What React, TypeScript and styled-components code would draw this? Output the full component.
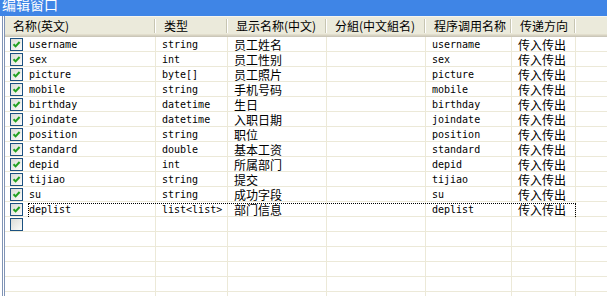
import React from 'react';
import styled, {createGlobalStyle} from "styled-components";

const GlobalStyle = createGlobalStyle`
  html, body {
    margin: 0;
    padding: 0;
    background: #fff;
  }
  body {
    font-family: "Noto Sans CJK SC", "DejaVu Sans", sans-serif;
  }
`;

type Field = {
  name: string;
  type: string;
  label: string;
  group: string;
  callName: string;
  direction: string;
};

const fields: Field[] = [
  {name: 'username', type: 'string', label: '员工姓名', group: '', callName: 'username', direction: '传入传出'},
  {name: 'sex', type: 'int', label: '员工性别', group: '', callName: 'sex', direction: '传入传出'},
  {name: 'picture', type: 'byte[]', label: '员工照片', group: '', callName: 'picture', direction: '传入传出'},
  {name: 'mobile', type: 'string', label: '手机号码', group: '', callName: 'mobile', direction: '传入传出'},
  {name: 'birthday', type: 'datetime', label: '生日', group: '', callName: 'birthday', direction: '传入传出'},
  {name: 'joindate', type: 'datetime', label: '入职日期', group: '', callName: 'joindate', direction: '传入传出'},
  {name: 'position', type: 'string', label: '职位', group: '', callName: 'position', direction: '传入传出'},
  {name: 'standard', type: 'double', label: '基本工资', group: '', callName: 'standard', direction: '传入传出'},
  {name: 'depid', type: 'int', label: '所属部门', group: '', callName: 'depid', direction: '传入传出'},
  {name: 'tijiao', type: 'string', label: '提交', group: '', callName: 'tijiao', direction: '传入传出'},
  {name: 'su', type: 'string', label: '成功字段', group: '', callName: 'su', direction: '传入传出'},
  {name: 'deplist', type: 'list<list>', label: '部门信息', group: '', callName: 'deplist', direction: '传入传出'},
];

const headers = ['名称(英文)', '类型', '显示名称(中文)', '分組(中文組名)', '程序调用名称', '传递方向'];

const COLUMNS = '151px 72px 99px 99px 86px 64px 1fr';
const GRID = '#ece9d8';

const CheckBox = ({checked}: {checked: boolean}) => (
  <StyledCheck>
    {checked && (
      <svg width="9" height="9" viewBox="0 0 9 9">
        <path d="M1.5 4.2 L3.6 6.4 L7.6 2" fill="none" stroke="#21a121" strokeWidth="2"/>
      </svg>
    )}
  </StyledCheck>
);

const App = () => {
  const fillers = [0, 1, 2, 3, 4];

  return (
    <Window>
      <GlobalStyle/>
      <TitleBar><span>编辑窗口</span></TitleBar>
      <Frame>
        <Header>
          {headers.map((h) => (
            <HeaderCell key={h}>
              <span>{h}</span>
              <Sep/>
            </HeaderCell>
          ))}
          <HeaderCell/>
        </Header>

        {fields.map((f, index) => (
          <Row key={f.name} $focused={index === fields.length - 1}>
            <NameCell>
              <CheckBox checked/>
              <Text $mono>{f.name}</Text>
            </NameCell>
            <Cell><Text $mono>{f.type}</Text></Cell>
            <Cell><Text>{f.label}</Text></Cell>
            <Cell><Text>{f.group}</Text></Cell>
            <Cell><Text $mono>{f.callName}</Text></Cell>
            <Cell><Text>{f.direction}</Text></Cell>
            <Cell $last/>
          </Row>
        ))}

        <Row>
          <NameCell><CheckBox checked={false}/></NameCell>
          <Cell/><Cell/><Cell/><Cell/><Cell/><Cell $last/>
        </Row>

        {fillers.map((i) => (
          <Row key={'f' + i}>
            <Cell/><Cell/><Cell/><Cell/><Cell/><Cell/><Cell $last/>
          </Row>
        ))}
      </Frame>
    </Window>
  );
};

export default App;

const Window = styled.div`
  width: 607px;
  height: 296px;
  overflow: hidden;
  background: #fff;
  display: flex;
  flex-direction: column;
`;

const TitleBar = styled.div`
  height: 16px;
  flex-shrink: 0;
  background: #3f85e6;
  color: #fff;
  font-size: 14px;
  line-height: 14px;
  padding-left: 2px;
  overflow: hidden;

  span {
    display: block;
    margin-top: -3px;
  }
`;

const Frame = styled.div`
  flex: 1;
  margin-left: 2px;
  border-left: 3px double #7f93b5;
  display: flex;
  flex-direction: column;
`;

const Header = styled.div`
  display: grid;
  grid-template-columns: ${COLUMNS};
  height: 21px;
  flex-shrink: 0;
  box-sizing: border-box;
  background: #ebeadb;
  border-top: 1px solid #f6f5ee;
  box-shadow: inset 0 -1px #cbc7b8, inset 0 -2px #d6d2c2, inset 0 -3px #e2decd;
`;

const HeaderCell = styled.div`
  display: flex;
  align-items: center;
  justify-content: space-between;
  padding-left: 8px;
  padding-bottom: 2px;
  font-size: 12px;
  line-height: 16px;
  color: #000;
  white-space: nowrap;
`;

const Sep = styled.div`
  width: 1px;
  height: 14px;
  margin-right: 1px;
  background: #c7c5b2;
  box-shadow: 1px 0 #fff;
`;

const Row = styled.div<{ $focused?: boolean }>`
  display: grid;
  grid-template-columns: ${COLUMNS};
  height: 15px;
  flex-shrink: 0;
  box-sizing: border-box;
  border-bottom: 1px solid ${GRID};
  position: relative;

  ${({$focused}) => $focused && `
    &::after {
      content: '';
      position: absolute;
      left: 23px;
      top: 1px;
      width: 548px;
      height: 14px;
      box-sizing: border-box;
      border: 1px dotted #000;
      border-bottom: none;
      pointer-events: none;
    }
  `}
`;

const Cell = styled.div<{ $last?: boolean }>`
  display: flex;
  align-items: center;
  box-sizing: border-box;
  padding-left: 6px;
  padding-top: 2px;
  border-right: ${({$last}) => ($last ? 'none' : `1px solid ${GRID}`)};
  white-space: nowrap;
  min-width: 0;
`;

const NameCell = styled(Cell)`
  padding-left: 5px;
  padding-top: 1px;
  gap: 6px;
`;

const Text = styled.span<{ $mono?: boolean }>`
  font-family: ${({$mono}) => ($mono
    ? '"DejaVu Sans Mono", "Liberation Mono", monospace'
    : '"Noto Sans CJK SC", sans-serif')};
  font-size: ${({$mono}) => ($mono ? '10px' : '12px')};
  line-height: 12px;
  color: #000;
`;

const StyledCheck = styled.span`
  width: 13px;
  height: 13px;
  flex-shrink: 0;
  box-sizing: border-box;
  border: 1px solid #1c5180;
  background: linear-gradient(135deg, #dcdcd7 0%, #fbfbf9 100%);
  display: flex;
  align-items: center;
  justify-content: center;
`;
